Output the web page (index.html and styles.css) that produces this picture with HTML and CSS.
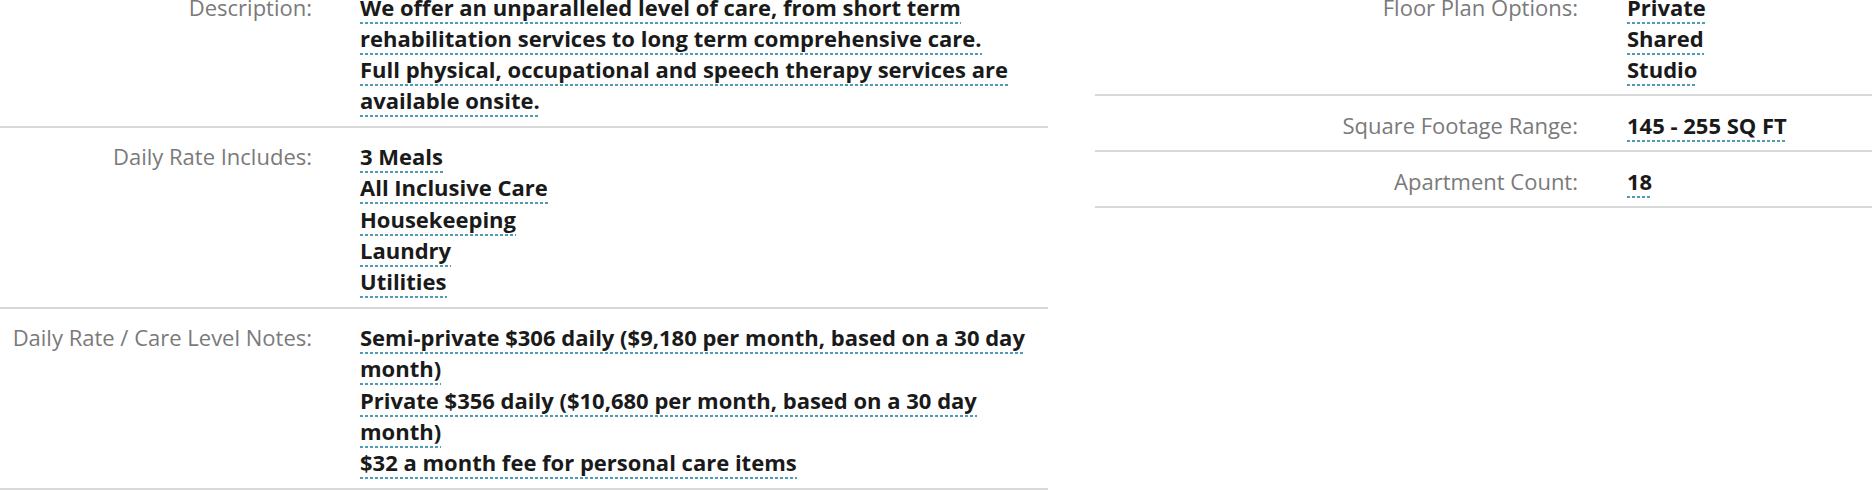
FILE: index.html
```html
<!DOCTYPE html>
<html lang="en">
<head>
<meta charset="utf-8">
<title>Community Details</title>
<link rel="stylesheet" href="styles.css">
</head>
<body>
<div class="details">
  <div class="col col-left">
    <div class="row">
      <div class="label">Description:</div>
      <div class="value value-text"><span class="u">We offer an unparalleled level of care, from short term rehabilitation services to long term comprehensive care. Full physical, occupational and speech therapy services are available onsite.</span></div>
    </div>
    <div class="row">
      <div class="label">Daily Rate Includes:</div>
      <div class="value">
        <div><span class="u">3 Meals</span></div>
        <div><span class="u">All Inclusive Care</span></div>
        <div><span class="u">Housekeeping</span></div>
        <div><span class="u">Laundry</span></div>
        <div><span class="u">Utilities</span></div>
      </div>
    </div>
    <div class="row">
      <div class="label">Daily Rate / Care Level Notes:</div>
      <div class="value">
        <div><span class="u">Semi-private $306 daily ($9,180 per month, based on a 30 day month)</span></div>
        <div><span class="u">Private $356 daily ($10,680 per month, based on a 30 day month)</span></div>
        <div><span class="u">$32 a month fee for personal care items</span></div>
      </div>
    </div>
  </div>
  <div class="col col-right">
    <div class="row">
      <div class="label">Floor Plan Options:</div>
      <div class="value">
        <div><span class="u">Private</span></div>
        <div><span class="u">Shared</span></div>
        <div><span class="u">Studio</span></div>
      </div>
    </div>
    <div class="row">
      <div class="label">Square Footage Range:</div>
      <div class="value"><span class="u">145 - 255 SQ FT</span></div>
    </div>
    <div class="row">
      <div class="label">Apartment Count:</div>
      <div class="value"><span class="u">18</span></div>
    </div>
  </div>
</div>
</body>
</html>
```
FILE: styles.css
```css
html, body {
  margin: 0;
  padding: 0;
  background: #ffffff;
}

body {
  font-family: "Open Sans", "Noto Sans", "Liberation Sans", sans-serif;
  font-size: 22px;
  line-height: 31.3px;
  color: #1c1c1c;
  overflow: hidden;
}

.details {
  display: flex;
  align-items: flex-start;
  gap: 47px;
  margin-top: -22px;
}

.col-left {
  width: 1048px;
  flex: none;
}

.col-right {
  flex: 1;
}

.row {
  display: grid;
  padding: 13.5px 0 9px;
  border-bottom: 2px solid #d9d9d9;
}

.col-left .row {
  grid-template-columns: 312px 672px;
  gap: 48px;
}

.col-right .row {
  grid-template-columns: 483px 1fr;
  gap: 49px;
}

.label {
  text-align: right;
  color: #7a7a7a;
  font-weight: 400;
}

.value {
  font-weight: 700;
  color: #1a1a1a;
}

.value-text {
  max-width: 655px;
}

.u {
  padding-bottom: 2px;
  background-image: repeating-linear-gradient(to right, #4f9bb3 0 3px, transparent 3px 5px);
  background-size: 100% 2px;
  background-position: left bottom;
  background-repeat: no-repeat;
  -webkit-box-decoration-break: clone;
  box-decoration-break: clone;
}
```
